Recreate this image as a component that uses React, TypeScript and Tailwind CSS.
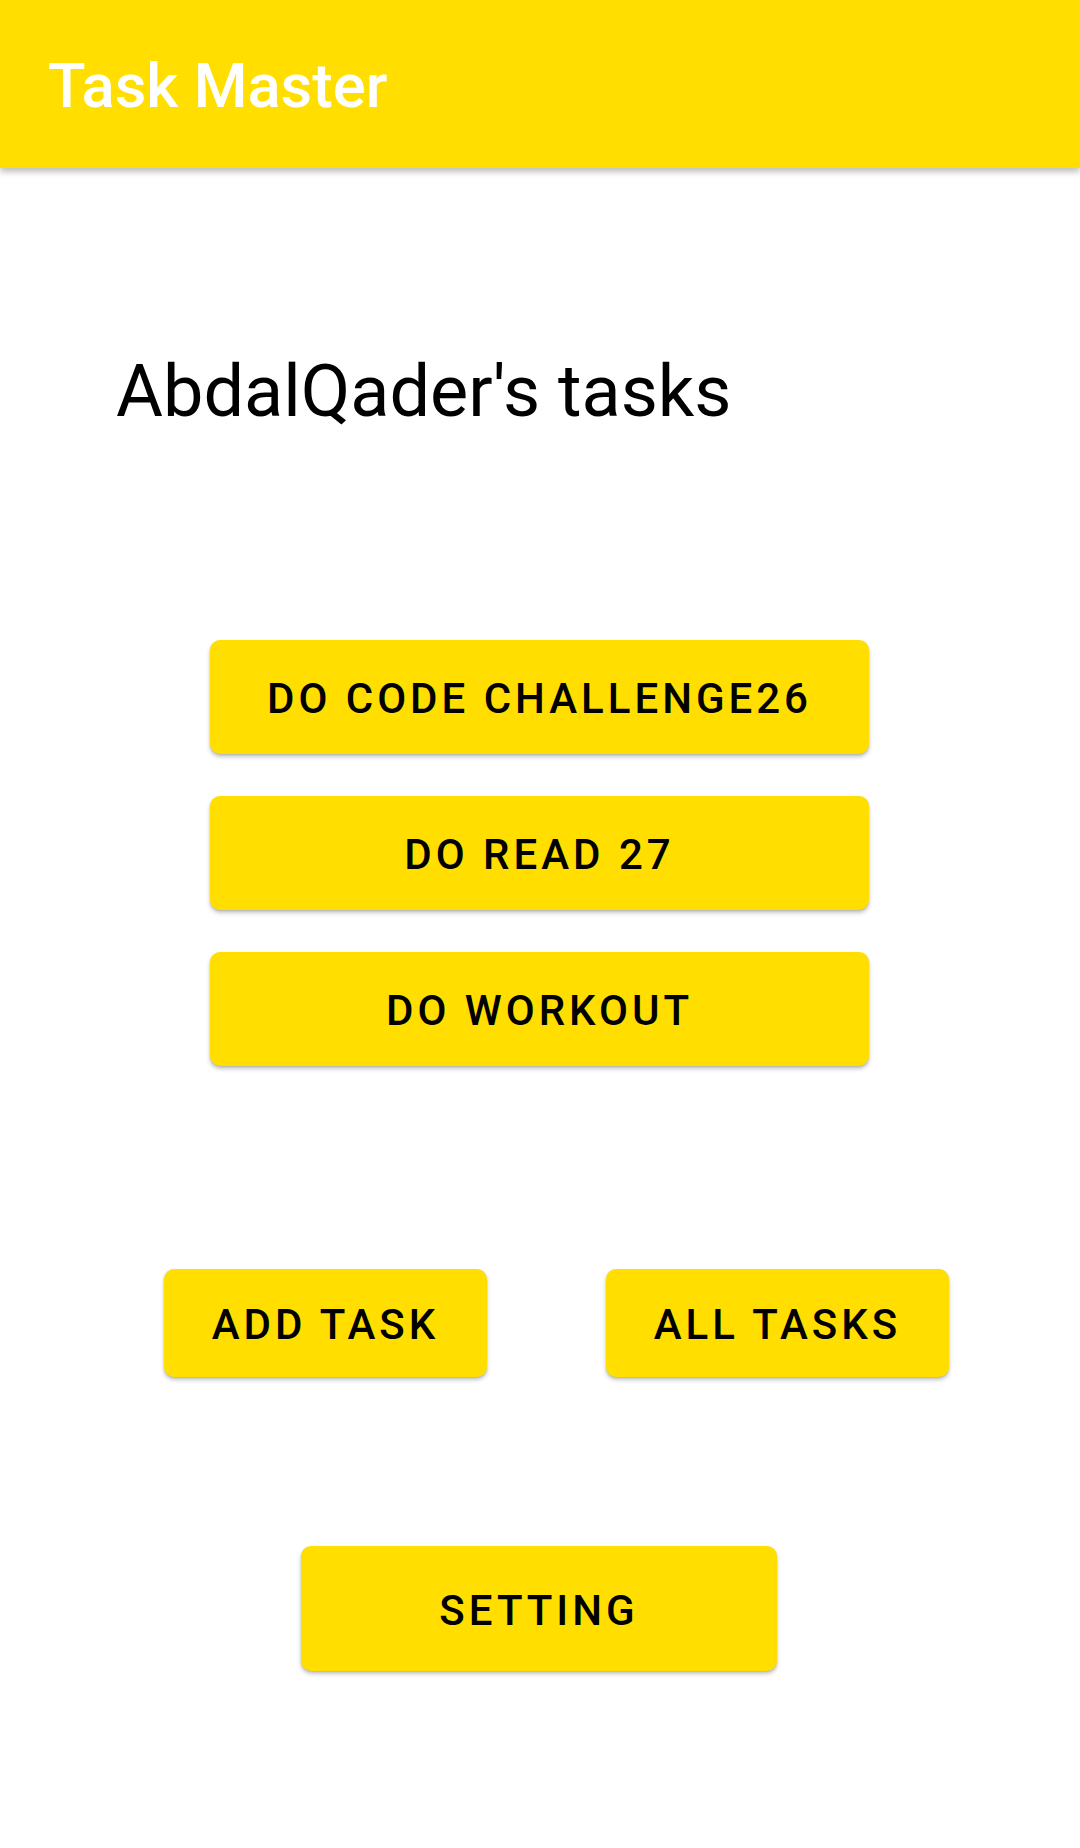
import React from "react";

function Btn({ label, className }: { label: string; className: string }) {
  return (
    <button
      className={
        "flex items-center justify-center rounded-[10px] bg-[#FFDE00] pt-[4px] text-[42px] font-medium leading-none tracking-[0.095em] text-black shadow-[0_3px_4px_rgba(0,0,0,0.22),0_1px_2px_rgba(0,0,0,0.12)] " +
        className
      }
      style={{ fontFamily: "Roboto, 'Liberation Sans', sans-serif" }}
    >
      {label}
    </button>
  );
}

export default function App() {
  return (
    <div
      className="flex min-h-[1848px] w-[1080px] flex-col bg-white"
      style={{ fontFamily: "Roboto, 'Liberation Sans', sans-serif" }}
    >
      <header className="relative z-10 h-[168px] bg-[#FFDE00] pl-[48px] pt-[56px] shadow-[0_4px_6px_rgba(0,0,0,0.25)]">
        <h1 className="text-[61.5px] font-medium leading-none text-white">Task Master</h1>
      </header>

      <h2 className="mt-[188px] pl-[116px] text-[72px] font-normal leading-none text-black">
        AbdalQader's tasks
      </h2>

      <div className="mt-[212px] flex flex-col items-center gap-[42px]">
        <Btn label="DO CODE CHALLENGE26" className="h-[114px] w-[659px] ml-[-1px]" />
        <Btn label="DO READ 27" className="h-[114px] w-[659px] ml-[-1px]" />
        <Btn label="DO WORKOUT" className="h-[114px] w-[659px] ml-[-1px]" />
      </div>

      <div className="mt-[203px] flex gap-[119px] pl-[164px]">
        <Btn label="ADD TASK" className="h-[108px] w-[323px]" />
        <Btn label="ALL TASKS" className="h-[108px] w-[343px]" />
      </div>

      <div className="mt-[169px] flex justify-center">
        <Btn label="SETTING" className="h-[125px] w-[476px] ml-[-2px]" />
      </div>
    </div>
  );
}
